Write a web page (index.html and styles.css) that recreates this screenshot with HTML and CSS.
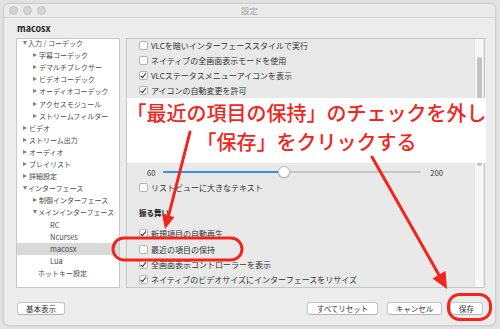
FILE: index.html
```html
<!DOCTYPE html>
<html lang="ja">
<head>
    <meta charset="UTF-8">
    <meta name="viewport" content="width=device-width, initial-scale=1.0">
    <title>設定</title>
    <link rel="stylesheet" href="styles.css">
</head>
<body>
    <div class="window">
        <div class="titlebar">
            <div class="lights"><span></span><span></span><span></span></div>
            <div class="title">設定</div>
        </div>

        <div class="main">
            <div class="section-name">macosx</div>

            <div class="panes">
                <!-- left: category tree -->
                <div class="tree">
                    <div class="tree-list">
                        <div class="row lv0"><i class="down"></i>入力 / コーデック</div>
                        <div class="row lv1"><i class="right"></i>字幕コーデック</div>
                        <div class="row lv1"><i class="right"></i>デマルチプレクサー</div>
                        <div class="row lv1"><i class="right"></i>ビデオコーデック</div>
                        <div class="row lv1"><i class="right"></i>オーディオコーデック</div>
                        <div class="row lv1"><i class="right"></i>アクセスモジュール</div>
                        <div class="row lv1"><i class="right"></i>ストリームフィルター</div>
                        <div class="row lv0"><i class="right"></i>ビデオ</div>
                        <div class="row lv0"><i class="right"></i>ストリーム出力</div>
                        <div class="row lv0"><i class="right"></i>オーディオ</div>
                        <div class="row lv0"><i class="right"></i>プレイリスト</div>
                        <div class="row lv0"><i class="right"></i>詳細設定</div>
                        <div class="row lv0"><i class="down"></i>インターフェース</div>
                        <div class="row lv1"><i class="right"></i>制御インターフェース</div>
                        <div class="row lv1"><i class="down"></i>メインインターフェース</div>
                        <div class="row lv2">RC</div>
                        <div class="row lv2">Ncurses</div>
                        <div class="row lv2 selected">macosx</div>
                        <div class="row lv2">Lua</div>
                        <div class="row lv1-leaf">ホットキー設定</div>
                    </div>
                </div>

                <!-- right: options -->
                <div class="prefs">
                    <div class="prefs-body">
                        <div class="opt"><span class="box"></span>VLCを暗いインターフェーススタイルで実行</div>
                        <div class="opt"><span class="box"></span>ネイティブの全画面表示モードを使用</div>
                        <div class="opt"><span class="box checked"></span>VLCステータスメニューアイコンを表示</div>
                        <div class="opt"><span class="box checked"></span>アイコンの自動変更を許可</div>

                        <div class="slider-row">
                            <span class="min">60</span>
                            <div class="slider">
                                <div class="fill"></div>
                                <div class="knob"></div>
                            </div>
                            <span class="max">200</span>
                        </div>
                        <div class="opt"><span class="box"></span>リストビューに大きなテキスト</div>

                        <div class="group-title">振る舞い</div>
                        <div class="opt tall"><span class="box checked"></span>新規項目の自動再生</div>
                        <div class="opt tall"><span class="box"></span>最近の項目の保持</div>
                        <div class="opt tall"><span class="box checked"></span>全画面表示コントローラーを表示</div>
                        <div class="opt tall"><span class="box checked"></span>ネイティブのビデオサイズにインターフェースをリサイズ</div>
                    </div>
                    <div class="scrollbar"><div class="thumb"></div></div>
                </div>
            </div>

            <div class="footer">
                <button class="btn">基本表示</button>
                <div class="spacer"></div>
                <button class="btn wide">すべてリセット</button>
                <button class="btn">キャンセル</button>
                <button class="btn save">保存</button>
            </div>
        </div>
    </div>

    <!-- annotation on top of the screenshot -->
    <div class="callout">「最近の項目の保持」のチェックを外し<br>「保存」をクリックする</div>

    <svg class="marks" width="500" height="329" viewBox="0 0 500 329">
        <g stroke="#f3241b" stroke-width="3" fill="none" stroke-linecap="round">
            <line x1="190" y1="132" x2="168.5" y2="216"/>
            <line x1="372" y1="157" x2="439" y2="275"/>
            <rect x="113" y="238" width="129" height="22" rx="11"/>
            <rect x="448.5" y="294.5" width="42" height="25" rx="11"/>
        </g>
        <g fill="#f3241b">
            <polygon points="165,229 174.5,217 162,214"/>
            <polygon points="447,289 445.5,271 432.5,278.5"/>
        </g>
    </svg>
</body>
</html>
```

FILE: styles.css
```css
/* CSS */
body {
    margin: 0;
    width: 500px;
    height: 329px;
    overflow: hidden;
    position: relative;
    background-color: #e3e3e3;
    font-family: "Noto Sans CJK JP", "Noto Sans", sans-serif;
    color: #333;
}

.window {
    margin: 4px 0 0 4px;
    width: 491px;
    height: 321px;
    background: #ececec;
    border-radius: 5px;
    box-shadow: 0 0 3px rgba(0, 0, 0, 0.25);
    display: flex;
    flex-direction: column;
    overflow: hidden;
}

.titlebar {
    height: 13px;
    border-bottom: 1px solid #d6d6d6;
    background: #eaeaea;
    position: relative;
    display: flex;
    align-items: center;
}

.lights {
    display: flex;
    gap: 5px;
    padding-left: 5px;
}

.lights span {
    width: 7px;
    height: 7px;
    border-radius: 50%;
    background: #d3d3d3;
    border: 0.5px solid #c4c4c4;
}

.title {
    position: absolute;
    left: 0;
    right: 0;
    text-align: center;
    font-size: 8.5px;
    line-height: 13px;
    color: #a5a5a5;
}

.main {
    flex: 1;
    padding: 0 10px 0 12px;
    display: flex;
    flex-direction: column;
}

.section-name {
    height: 18px;
    padding-top: 2px;
    line-height: 18px;
    font-size: 9px;
    font-weight: bold;
    color: #222;
    padding-left: 1px;
}

.panes {
    height: 250px;
    display: flex;
    gap: 6px;
}

/* tree */
.tree {
    width: 102px;
    background: white;
    border: 1px solid #c9c9c9;
    overflow: hidden;
}

.tree-list {
    margin-top: -2px;
}

.row {
    height: 12.1px;
    display: flex;
    align-items: center;
    font-size: 7px;
    color: #4a4a4a;
    white-space: nowrap;
}

.row i {
    width: 0;
    height: 0;
    margin-right: 2px;
}

.row i.right {
    border-left: 4px solid #7d7d7d;
    border-top: 2.5px solid transparent;
    border-bottom: 2.5px solid transparent;
}

.row i.down {
    border-top: 4px solid #7d7d7d;
    border-left: 2.5px solid transparent;
    border-right: 2.5px solid transparent;
    margin-right: 1px;
}

.lv0 { padding-left: 6px; }
.lv1 { padding-left: 16px; }
.lv2 { padding-left: 33px; font-size: 7.5px; }
.lv1-leaf { padding-left: 21px; }

.row.selected {
    background: #d9d9d9;
}

/* options */
.prefs {
    flex: 1;
    display: flex;
    border: 1px solid #c6c6c6;
    background: #e9e9e9;
}

.prefs-body {
    flex: 1;
    padding: 0 0 0 12px;
    overflow: hidden;
}

.opt {
    height: 15px;
    display: flex;
    align-items: center;
    font-size: 8px;
    color: #333;
    white-space: nowrap;
}

.opt.tall {
    height: 15.4px;
}

.prefs-body > .opt:first-child {
    margin-top: -1px;
}

.box {
    width: 7px;
    height: 7px;
    border: 1px solid #b3b3b3;
    border-radius: 2px;
    background: white;
    margin-right: 3px;
    position: relative;
}

.box.checked::after {
    content: "";
    position: absolute;
    left: 2px;
    top: 0px;
    width: 2px;
    height: 4.5px;
    border-right: 1.2px solid #222;
    border-bottom: 1.2px solid #222;
    transform: rotate(40deg);
}

.slider-row {
    margin-top: 66px;
    height: 16px;
    display: flex;
    align-items: center;
    padding-left: 8px;
    font-size: 7.5px;
    color: #333;
}

.slider {
    width: 258px;
    height: 2px;
    margin: 0 9px 0 8px;
    background: #c6c6c6;
    border-radius: 1px;
    position: relative;
}

.fill {
    width: 121px;
    height: 2px;
    background: #3c8cf4;
    border-radius: 1px;
}

.knob {
    position: absolute;
    left: 115px;
    top: -5px;
    width: 10px;
    height: 10px;
    border-radius: 50%;
    background: white;
    border: 0.5px solid #b8b8b8;
    box-shadow: 0 0.5px 1px rgba(0, 0, 0, 0.2);
}

.group-title {
    height: 12px;
    margin-top: 11.5px;
    margin-bottom: 7.5px;
    line-height: 12px;
    font-size: 7.5px;
    font-weight: bold;
    color: #222;
}

.scrollbar {
    width: 8px;
    background: #f7f7f7;
    border-left: 1px solid #e1e1e1;
    margin-right: 1px;
}

.thumb {
    margin: 18px auto 0;
    width: 5px;
    height: 109px;
    border-radius: 3px;
    background: #c2c2c2;
}

/* buttons */
.footer {
    margin-top: 14px;
    display: flex;
    align-items: center;
    gap: 8px;
    padding: 0 2px 0 1px;
}

.spacer {
    flex: 1;
}

.btn {
    height: 13px;
    padding: 0;
    width: 48px;
    font-family: "Noto Sans CJK JP", "Noto Sans", sans-serif;
    font-size: 7.5px;
    line-height: 11px;
    color: #333;
    background: white;
    border: 1px solid #c6c6c6;
    border-bottom-color: #b3b3b3;
    border-radius: 3px;
}

.btn.wide { width: 71px; margin-right: 1px; }
.footer .btn:nth-child(4) { width: 55px; }
.btn.save { width: 33px; }

/* annotation */
.callout {
    position: absolute;
    left: 127px;
    top: 98px;
    width: 359px;
    height: 65px;
    background: white;
    display: flex;
    flex-direction: column;
    align-items: center;
    white-space: nowrap;
    text-align: center;
    font-size: 20px;
    line-height: 29px;
    font-weight: 500;
    color: #f3241b;
}

.marks {
    position: absolute;
    left: 0;
    top: 0;
    pointer-events: none;
}
```
